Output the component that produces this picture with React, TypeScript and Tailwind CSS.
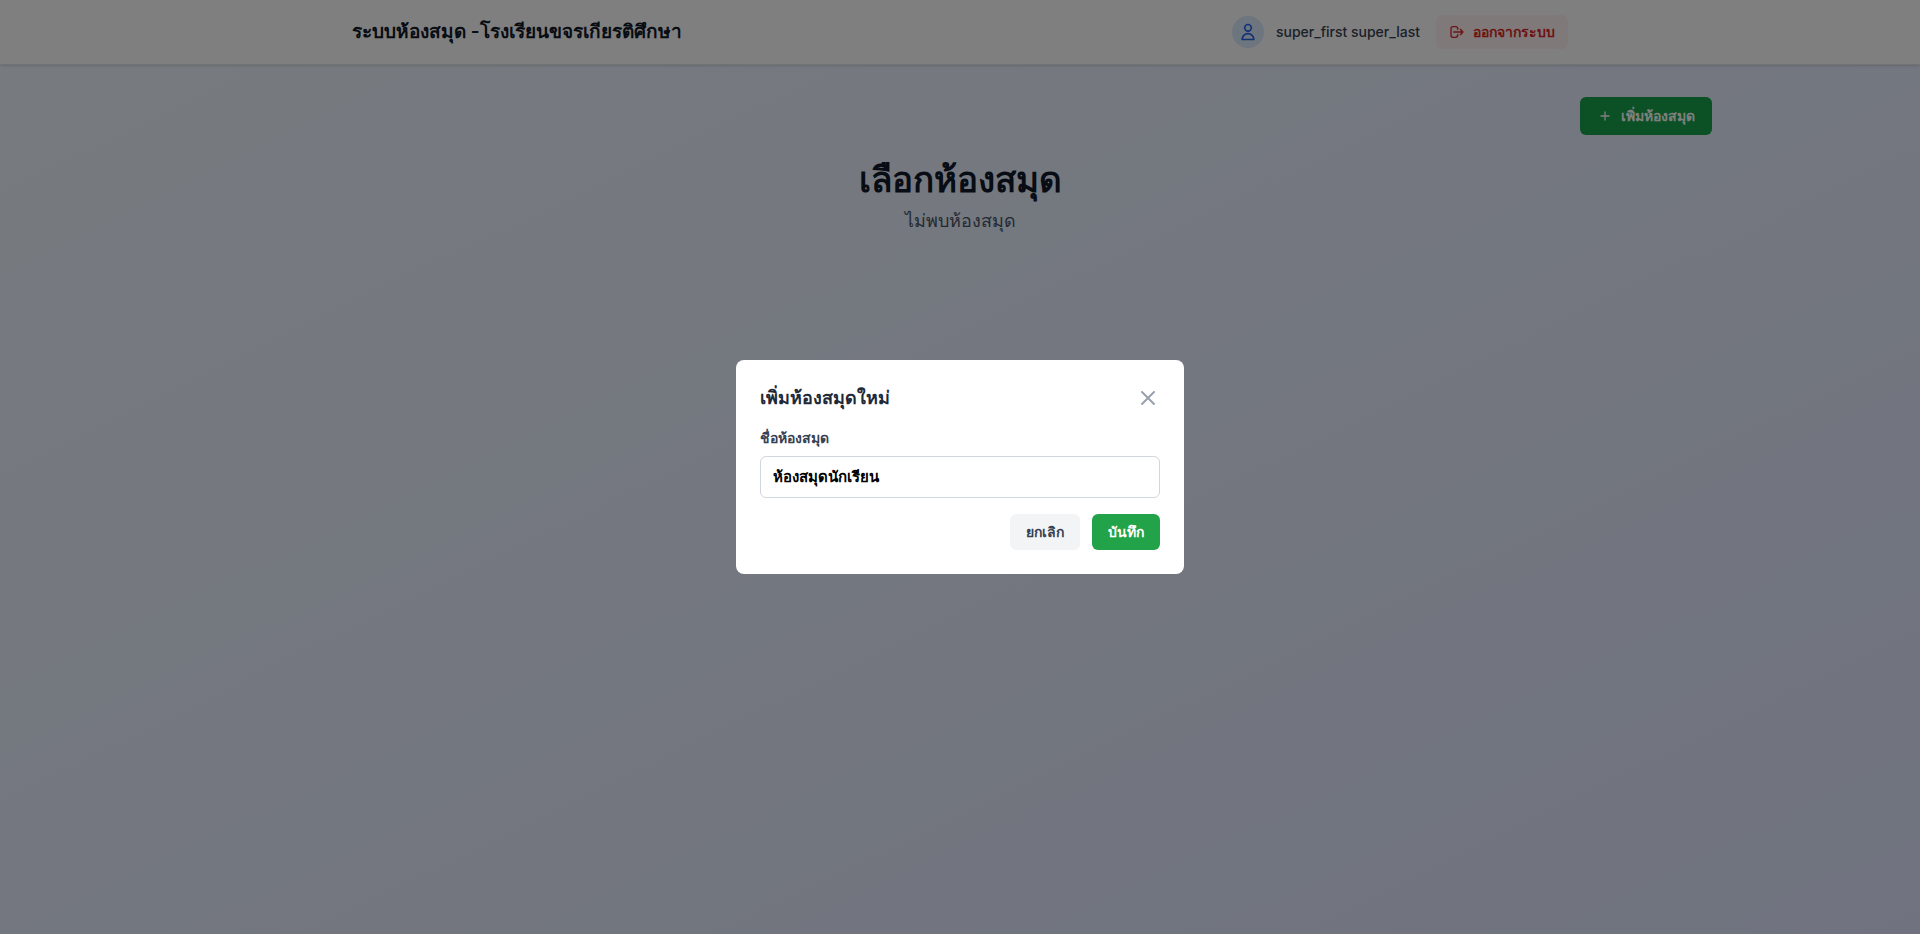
import { useState } from "react";

function UserIcon() {
  return (
    <svg viewBox="0 0 24 24" fill="none" stroke="currentColor" strokeWidth="2" strokeLinecap="round" strokeLinejoin="round" className="size-5" aria-hidden="true">
      <path d="M16 7a4 4 0 1 1-8 0 4 4 0 0 1 8 0zM12 14a7 7 0 0 0-7 7h14a7 7 0 0 0-7-7z" />
    </svg>
  );
}

function LogoutIcon() {
  return (
    <svg viewBox="0 0 24 24" fill="none" stroke="currentColor" strokeWidth="2" strokeLinecap="round" strokeLinejoin="round" className="size-4" aria-hidden="true">
      <path d="M17 16l4-4m0 0l-4-4m4 4H7m6 4v1a3 3 0 0 1-3 3H6a3 3 0 0 1-3-3V7a3 3 0 0 1 3-3h4a3 3 0 0 1 3 3v1" />
    </svg>
  );
}

function PlusIcon() {
  return (
    <svg viewBox="0 0 24 24" fill="none" stroke="currentColor" strokeWidth="2" strokeLinecap="round" className="size-4" aria-hidden="true">
      <path d="M12 6v12M6 12h12" />
    </svg>
  );
}

function CloseIcon() {
  return (
    <svg viewBox="0 0 24 24" fill="none" stroke="currentColor" strokeWidth="2" strokeLinecap="round" className="size-6" aria-hidden="true">
      <path d="M6 18L18 6M6 6l12 12" />
    </svg>
  );
}

function Header() {
  return (
    <header className="border-b border-gray-200 bg-white shadow-sm">
      <div className="mx-auto flex h-16 max-w-7xl items-center justify-between px-8">
        <h1 className="text-[19px] leading-7 font-semibold text-gray-900">ระบบห้องสมุด -โรงเรียนขจรเกียรติศึกษา</h1>
        <div className="flex items-center gap-4">
          <div className="flex items-center gap-3">
            <span className="flex size-8 items-center justify-center rounded-full bg-blue-100 text-[#2563eb]">
              <UserIcon />
            </span>
            <span className="text-sm font-medium text-gray-700">super_first super_last</span>
          </div>
          <button
            type="button"
            className="flex items-center gap-2 rounded-md border border-transparent bg-red-50 px-3 py-1.5 text-sm font-semibold text-[#dc2626]"
          >
            <LogoutIcon />
            ออกจากระบบ
          </button>
        </div>
      </div>
    </header>
  );
}

function AddLibraryDialog({ onClose }: { onClose: () => void }) {
  const [name, setName] = useState("ห้องสมุดนักเรียน");
  return (
    <div className="fixed inset-0 z-50 flex items-center justify-center bg-black/50">
      <form
        role="dialog"
        aria-modal="true"
        aria-labelledby="dialog-title"
        onSubmit={(e) => e.preventDefault()}
        className="w-full max-w-md rounded-lg bg-white p-6"
      >
        <div className="mb-4 flex items-center justify-between">
          <h2 id="dialog-title" className="text-lg font-semibold text-gray-800">
            เพิ่มห้องสมุดใหม่
          </h2>
          <button type="button" aria-label="ปิด" onClick={onClose} className="text-gray-400">
            <CloseIcon />
          </button>
        </div>
        <label htmlFor="library-name" className="mb-2 block text-sm font-semibold text-gray-700">
          ชื่อห้องสมุด
        </label>
        <input
          id="library-name"
          type="text"
          value={name}
          onChange={(e) => setName(e.target.value)}
          className="block w-full rounded-md border border-gray-300 px-3 py-2 text-[15px] leading-6 font-semibold text-black"
        />
        <div className="mt-4 flex justify-end gap-3">
          <button
            type="button"
            onClick={onClose}
            className="rounded-md bg-gray-100 px-4 py-2 text-sm font-semibold text-gray-700"
          >
            ยกเลิก
          </button>
          <button type="submit" className="rounded-md bg-[#22a34a] px-4 py-2 text-sm font-semibold text-white">
            บันทึก
          </button>
        </div>
      </form>
    </div>
  );
}

export default function App() {
  const [open, setOpen] = useState(true);
  return (
    <div className="min-h-screen bg-linear-to-br/srgb from-[#eff6ff] to-[#e0e7ff] font-['Inter','Noto_Sans',sans-serif]">
      <Header />
      <main className="mx-auto max-w-[1536px] px-4 py-8">
        <div className="flex justify-end">
          <button
            type="button"
            onClick={() => setOpen(true)}
            className="flex items-center gap-2 rounded-md border border-transparent bg-[#16a34a] px-4 py-2 text-sm font-semibold text-white"
          >
            <PlusIcon />
            เพิ่มห้องสมุด
          </button>
        </div>
        <div className="mt-6 text-center">
          <h2 className="mb-2 text-[35px] leading-10 font-bold text-gray-900">เลือกห้องสมุด</h2>
          <p className="text-lg text-gray-600">ไม่พบห้องสมุด</p>
        </div>
      </main>
      {open && <AddLibraryDialog onClose={() => setOpen(false)} />}
    </div>
  );
}
